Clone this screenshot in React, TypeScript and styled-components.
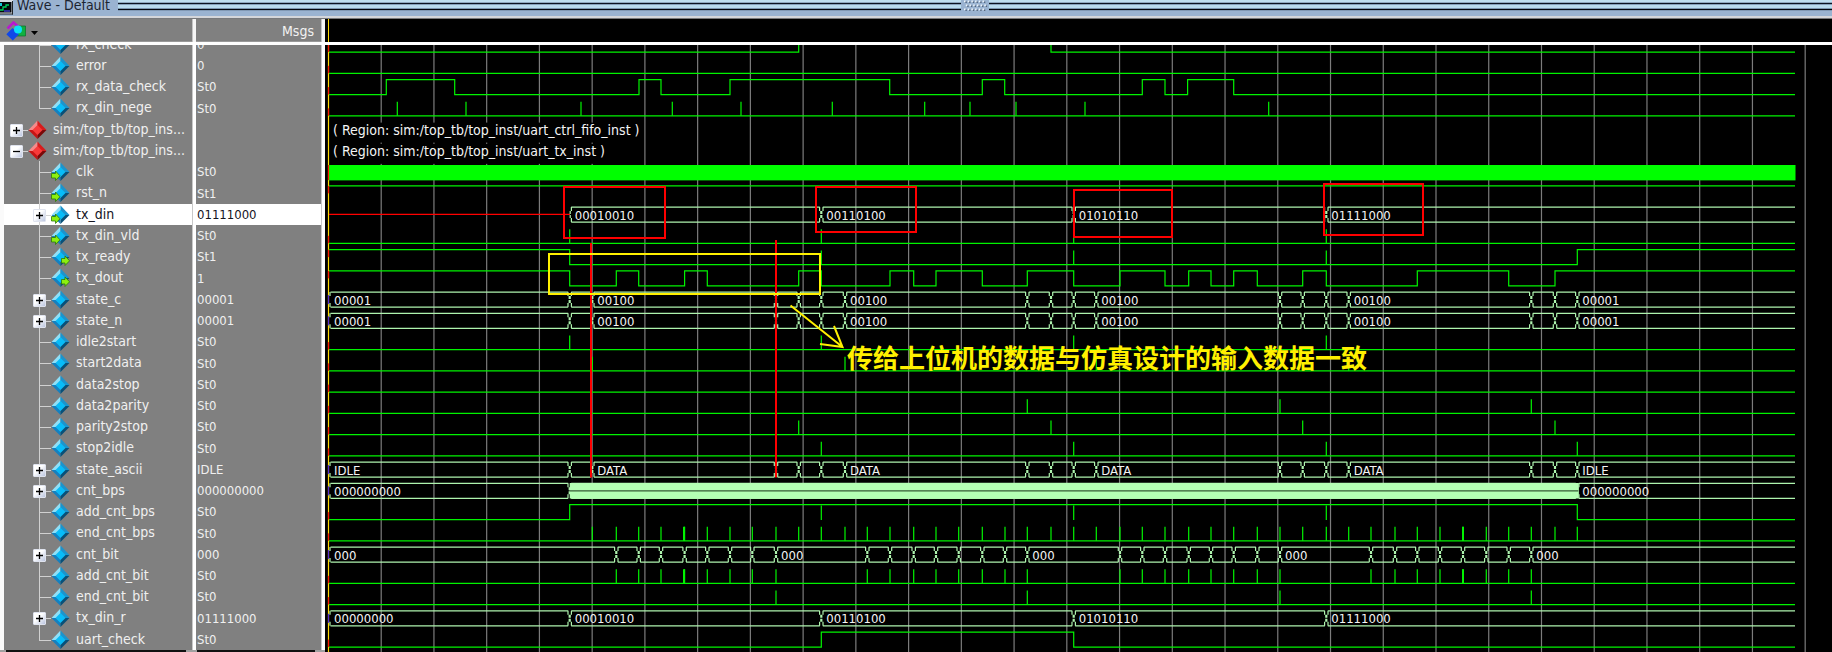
import React from 'react';
import styled, { createGlobalStyle, css } from 'styled-components';

const GlobalStyle = createGlobalStyle`
  * { box-sizing: border-box; }
  body {
    margin: 0;
    background: #000;
    overflow: hidden;
    font-family: "DejaVu Sans Condensed", "DejaVu Sans", sans-serif;
    font-size: 13px;
  }
`;

/* ---------- shell ---------- */

const Window = styled.div`
  display: flex;
  flex-direction: column;
  min-height: 100vh;
  background: #000;
`;

const TitleBar = styled.header`
  display: flex;
  align-items: flex-start;
  height: 16px;
  background: #9ab3d1;
`;

const Title = styled.h1`
  margin: 0;
  padding: 0 8px 0 3px;
  font-size: 14px;
  font-weight: 400;
  line-height: 10px;
  color: #1c2430;
  white-space: pre;
`;

const TitleRule = styled.div`
  flex: 1;
  height: 11px;
  background: linear-gradient(
    #bfe0f0 0 2px, #8fa9c0 2px 3px, #0a1420 3px 4px, #86a0ba 4px 5px,
    #b9dcee 5px 8px, #7c96b0 8px 9px, #04080c 9px 10px, #8098b4 10px 11px
  );
`;

const Bevel = styled.div`
  height: 3px;
  background: linear-gradient(#d4d6da 0 2px, #77797c 2px 3px);
`;

const HeaderRow = styled.div`
  display: flex;
  height: 26px;
  border-bottom: 3px solid #fff;
  box-shadow: inset 0 -1px 0 #9a9a9a;
  background: #808080;
`;

const HeaderCell = styled.div<{ $width: number; $end?: boolean }>`
  display: flex;
  align-items: center;
  justify-content: ${(p) => (p.$end ? 'flex-end' : 'flex-start')};
  width: ${(p) => p.$width}px;
  padding: 0 8px 0 6px;
  border-right: 3px solid #f6f6f6;
  box-shadow: inset -1px 0 0 #c4c4c4;
  color: #f2f2f2;
  font-size: 14px;
`;

const TimeCell = styled.div`
  flex: 1;
  padding-left: 3px;
  background: #000;
`;

const HeaderCursor = styled.div`
  width: 1px;
  height: 100%;
  background: #ffd800;
`;

const ToolButton = styled.button`
  display: flex;
  align-items: center;
  gap: 4px;
  padding: 0;
  border: 0;
  background: none;
`;

const Body = styled.main`
  display: flex;
  flex: 1;
  overflow: hidden;
`;

const Side = styled.section`
  flex: none;
  width: 325px;
  overflow: hidden;
  background: #808080;
`;

/* ---------- object list ---------- */

const ObjectTable = styled.table`
  width: 100%;
  margin-top: -11px;
  border-spacing: 0;
  table-layout: fixed;
`;

const ObjectRow = styled.tr<{ $selected?: boolean }>`
  height: 21px;
  color: #f0f0f0;
  line-height: 21px;
  &:nth-child(4n) { height: 22px; }
  ${(p) =>
    p.$selected &&
    css`
      background: #fff;
      color: #14141e;
    `}
`;

const NameCell = styled.td`
  width: 196px;
  padding: 0;
  border-left: 4px solid #fafafa;
  border-right: 3px solid #fff;
  box-shadow: inset -1px 0 0 #c8c8c8;
  font-size: 14px;
`;

const ValueCell = styled.td`
  padding: 0 0 0 1px;
  border-right: 3px solid #fff;
  box-shadow: inset -1px 0 0 #c8c8c8;
`;

const NameLine = styled.div<{ $indent: number }>`
  display: flex;
  align-items: stretch;
  height: 21px;
  padding-left: ${(p) => p.$indent}px;
  white-space: nowrap;
  tr:nth-child(4n) & { height: 22px; }
`;

const Twig = styled.span<{ $kind: 'mid' | 'last' | 'root' }>`
  flex: none;
  width: 18px;
  padding-top: 5px;
  background-image: linear-gradient(#d0d0d0, #d0d0d0), linear-gradient(#d0d0d0, #d0d0d0);
  background-repeat: no-repeat;
  background-position: 6px 0, 6px 11px;
  background-size: 1px ${(p) => (p.$kind === 'mid' ? '100%' : p.$kind === 'last' ? '12px' : '0')}, 13px 1px;
`;

const Expander = styled.button`
  display: flex;
  align-items: center;
  justify-content: center;
  width: 13px;
  height: 13px;
  padding: 0;
  border: 1px solid #dfe3ee;
  border-radius: 1px;
  background: linear-gradient(135deg, #fff 40%, #bcc6e0);
`;

const Name = styled.span`
  margin-left: 6px;
`;

const BottomStrip = styled.div`
  display: flex;
  gap: 11px;
  height: 2px;
  padding-left: 6px;
  background: #a0a0a0;
`;

const StripBar = styled.div<{ $width: number }>`
  width: ${(p) => p.$width}px;
  height: 2px;
  background: #111;
`;

type Icon = 'plain' | 'in' | 'out' | 'region';

const DiamondSvg = styled.svg`
  flex: none;
`;

const Diamond = ({ kind }: { kind: Icon }) => {
  const c =
    kind === 'region'
      ? { tl: '#f58a8a', tr: '#d81c1c', bl: '#c81414', br: '#7a0808', mid: '#f83a3a' }
      : { tl: '#8fe0f8', tr: '#1c94cc', bl: '#1480c0', br: '#085078', mid: '#08bcf8' };
  return (
    <DiamondSvg width="19" height="21" viewBox="0 0 19 21" aria-hidden="true">
      <path d="M9.500 1.500V11H0.500Z" fill={c.tl} />
      <path d="M9.500 1.500L18.500 11H9.500Z" fill={c.tr} />
      <path d="M0.500 11H9.500V20Z" fill={c.bl} />
      <path d="M18.500 11L9.500 20V11Z" fill={c.br} />
      <path d="M9.500 6L14.500 11L9.500 16L4.500 11Z" fill={c.mid} />
      {kind === 'in' && (
        <path d="M0.500 12.500H4.500V10L9 14.800L4.500 19.500V17H0.500Z" fill="#8cf010" stroke="#2c7a08" strokeWidth=".8" />
      )}
      {kind === 'out' && (
        <path d="M10.500 12.500H14V10L18.600 14.800L14 19.500V17H10.500Z" fill="#8cf010" stroke="#2c7a08" strokeWidth=".8" />
      )}
    </DiamondSvg>
  );
};

/* ---------- data ---------- */

interface Item {
  name: string;
  value: string;
  icon?: Icon;
  expand?: '+' | '-';
  selected?: boolean;
  last?: boolean;
}

const items: Item[] = [
  { name: 'rx_check', value: '0' },
  { name: 'error', value: '0' },
  { name: 'rx_data_check', value: 'St0' },
  { name: 'rx_din_nege', value: 'St0', last: true },
  { name: 'sim:/top_tb/top_ins...', value: '', icon: 'region', expand: '+' },
  { name: 'sim:/top_tb/top_ins...', value: '', icon: 'region', expand: '-' },
  { name: 'clk', value: 'St0', icon: 'in' },
  { name: 'rst_n', value: 'St1', icon: 'in' },
  { name: 'tx_din', value: '01111000', icon: 'in', expand: '+', selected: true },
  { name: 'tx_din_vld', value: 'St0', icon: 'in' },
  { name: 'tx_ready', value: 'St1', icon: 'out' },
  { name: 'tx_dout', value: '1', icon: 'out' },
  { name: 'state_c', value: '00001', expand: '+' },
  { name: 'state_n', value: '00001', expand: '+' },
  { name: 'idle2start', value: 'St0' },
  { name: 'start2data', value: 'St0' },
  { name: 'data2stop', value: 'St0' },
  { name: 'data2parity', value: 'St0' },
  { name: 'parity2stop', value: 'St0' },
  { name: 'stop2idle', value: 'St0' },
  { name: 'state_ascii', value: 'IDLE', expand: '+' },
  { name: 'cnt_bps', value: '000000000', expand: '+' },
  { name: 'add_cnt_bps', value: 'St0' },
  { name: 'end_cnt_bps', value: 'St0' },
  { name: 'cnt_bit', value: '000', expand: '+' },
  { name: 'add_cnt_bit', value: 'St0' },
  { name: 'end_cnt_bit', value: 'St0' },
  { name: 'tx_din_r', value: '01111000', expand: '+' },
  { name: 'uart_check', value: 'St0', last: true },
];

/* ---------- wave drawing ---------- */

const X0 = 329;
const X1 = 1795;
const GREEN = '#00f400';
const BUS = '#aef4ae';

// Baud-tick positions, one for each bit period.
const T = [
  569.7, 592.3, 616.3, 638.7, 661, 684.6, 707.3, 730, 752.3, 776, 798.7, 821.3, 845, 867.3, 890,
  913.7, 936, 958.7, 982.3, 1005, 1027.3, 1051, 1073.7, 1096.3, 1120, 1142.3, 1165, 1188.7, 1211,
  1233.7, 1257.3, 1280, 1302.7, 1326.3, 1348.7, 1371, 1395, 1417.3, 1440, 1463, 1486.3, 1508.7,
  1531.3, 1555, 1577.3,
];
const at = (...n: number[]) => n.map((i) => T[i]);
const frames = (n: number) => at(n, n + 11, n + 22, n + 33);
const span = (a: number, b: number) => T.slice(a, b + 1);

const low = (row: number) => 52.1 + 21.25 * row;
const high = (row: number) => low(row) - 15;

const Line = styled.path<{ $color?: string; $w?: number }>`
  fill: none;
  stroke: ${(p) => p.$color ?? GREEN};
  stroke-width: ${(p) => p.$w ?? 1.2};
`;

const WaveSvg = styled.svg`
  flex: 1;
  min-width: 0;
  background: #000;
`;

const BusText = styled.text<{ $large?: boolean }>`
  fill: #f4f4f4;
  font-size: ${(p) => (p.$large ? 14 : 13)}px;
  white-space: pre;
`;

const NoteText = styled.text`
  fill: #fff000;
  font-family: "Noto Sans CJK SC", sans-serif;
  font-size: 26px;
  font-weight: 700;
`;

const Level = ({ row, edges = [], start = 0 }: { row: number; edges?: number[]; start?: 0 | 1 }) => {
  let v = start;
  const y = () => (v ? high(row) : low(row));
  let d = `M${X0} ${y()}`;
  edges.forEach((x) => {
    d += `H${x}`;
    v = v ? 0 : 1;
    d += `V${y()}`;
  });
  return (
    <>
      <Line d={`${d}H${X1}`} />
      <Line
        $color="#ff1800"
        d={start ? `M328.500 ${high(row)}V${high(row) + 7.500}` : `M328.500 ${low(row) - 7.500}V${low(row)}`}
      />
    </>
  );
};

const Ticks = ({ row, xs, down }: { row: number; xs: number[]; down?: boolean }) => (
  <Line
    d={xs
      .map((x) => (down ? `M${x} ${high(row) + 1}V${low(row) + 0.5}` : `M${x} ${low(row) - 14}V${low(row)}`))
      .join('')}
  />
);

const Bus = ({
  row, xs, labels, from = X0, open,
}: { row: number; xs: number[]; labels: [number, string][]; from?: number; open?: boolean }) => {
  const h = high(row);
  const l = low(row);
  const stops = [from, ...xs, X1];
  let rails = '';
  for (let i = 0; i < stops.length - 1; i++) {
    const a = stops[i] + 1.5;
    const b = i === stops.length - 2 ? X1 : stops[i + 1] - 1.5;
    rails += `M${a} ${h}H${b}M${a} ${l}H${b}`;
  }
  // One side of a value change: outer stubs at both rails, inner stroke between them.
  const side = (x: number, s: 1 | -1) =>
    `M${x + s * 1.7} ${h}V${h + 4}M${x + s * 0.5} ${h + 4}V${h + 7}M${x + s * 0.5} ${l - 7}V${l - 4}M${x + s * 1.7} ${l - 4}V${l}`;
  const both = xs.map((x) => side(x, 1) + side(x, -1)).join('');
  return (
    <>
      <Line $color={BUS} d={rails + both + (open ? side(from, 1) : '')} />
      {!open && (
        <>
          <Line $color="#5a30d0" d={`M328.500 ${h + 3}V${l - 3}`} />
          <Line $color={BUS} d={`M330 ${h}V${h + 4}M330 ${l}V${l - 4}`} />
        </>
      )}
      {labels.map(([x, t]) => (
        <BusText key={x} x={x + 5} y={l - 2.6}>{t}</BusText>
      ))}
    </>
  );
};

const stateXs = at(0, 1, 9, 10, 11, 12, 20, 21, 22, 23, 31, 32, 33, 34, 42, 43, 44);
const stateLabels = (idle: string, data: string): [number, string][] => [
  [X0, idle],
  ...frames(1).map((x): [number, string] => [x, data]),
  [T[44], idle],
];
const bitXs = [...span(2, 9), ...span(13, 20), ...span(24, 31), ...span(35, 42)];
const words = ['00010010', '00110100', '01010110', '01111000'];
const wordLabels = frames(0).map((x, i): [number, string] => [x, words[i]]);

const Region = ({ row, width, text }: { row: number; width: number; text: string }) => (
  <>
    <rect x="330" y={low(row) - 14.5} width={width} height="20" fill="#000" />
    <BusText $large x="333" y={low(row) - 2.4}>{text}</BusText>
  </>
);

const Waves = () => (
  <WaveSvg role="img" aria-label="Signal waveforms">
    <g transform="translate(-325 -45)">
      <Line
        $color="#7c7c7c"
        d={Array.from({ length: 28 }, (_, i) => `M${381.2 + 52.74 * i} 45V2000`).join('')}
      />
      <Line $color="#ffd800" d="M328.500 45V2000" />

      <Level row={0} edges={[798.7, 1051]} />
      <Level row={1} />
      <Level
        row={2}
        edges={[386.3, 454.7, 639, 661, 730, 889.7, 982.3, 1004.7, 1142.3, 1165, 1187.6, 1233.7]}
      />
      <Level row={3} />
      <Ticks row={3} xs={[397.3, 466, 581, 672.3, 741, 832.3, 924.7, 970, 1016, 1085, 1268.7]} />
      <Region row={4} width={308} text="( Region: sim:/top_tb/top_inst/uart_ctrl_fifo_inst )" />
      <Region row={5} width={274} text="( Region: sim:/top_tb/top_inst/uart_tx_inst )" />
      <rect x="328.500" y="165" width="1467" height="15.400" fill="#00ff00" />
      <Line $color="#ff1800" d="M328.500 165V180" />
      <Level row={7} start={1} />
      <Line $color="#ff0000" d={`M${X0} 214.400H570`} />
      <Bus row={8} from={T[0]} open xs={frames(0).slice(1)} labels={wordLabels} />
      <Level row={9} />
      <Ticks row={9} xs={frames(0)} />
      <Level row={10} start={1} edges={at(0, 44)} />
      <Ticks row={10} xs={at(11, 22, 33)} />
      <Level
        row={11}
        start={1}
        edges={at(0, 2, 3, 5, 6, 10, 11, 14, 15, 16, 18, 20, 22, 24, 26, 27, 28, 29, 30, 32, 33, 37, 41, 43)}
      />
      <Bus row={12} xs={stateXs} labels={stateLabels('00001', '00100')} />
      <Bus row={13} xs={stateXs} labels={stateLabels('00001', '00100')} />
      {[14, 15, 16, 17, 18, 19, 23, 25, 26].map((r) => <Level key={r} row={r} />)}
      <Ticks row={14} xs={frames(0)} />
      <Ticks row={15} xs={frames(1)} />
      <Ticks row={17} xs={frames(9)} />
      <Ticks row={18} xs={frames(10)} />
      <Ticks row={19} xs={frames(11)} />
      <Bus row={20} xs={stateXs} labels={stateLabels('IDLE', 'DATA')} />
      <Bus row={21} xs={at(0, 44)} labels={[[X0, '000000000'], [T[44], '000000000']]} />
      <rect x={T[0]} y="483" width={T[44] - T[0] + 1.5} height="15.500" fill="#b4ffb4" />
      <Line $color="#345a34" d={`M${T[0]} 490.800H${T[44] + 1}`} />
      <Level row={22} edges={at(0, 44)} />
      <Ticks row={22} xs={at(11, 22, 33)} down />
      <Ticks row={23} xs={T.slice(1)} />
      <Line $w={2} d={`M${T[5] - 0.6} ${low(23) - 14}v14M${T[39]} ${low(23) - 14}v14`} />
      <Bus
        row={24}
        xs={bitXs}
        labels={[[X0, '000'], ...frames(9).map((x): [number, string] => [x, '000'])]}
      />
      <Ticks row={25} xs={bitXs} />
      <Line $w={2} d={`M${T[5] - 0.6} ${low(25) - 14}v14M${T[39]} ${low(25) - 14}v14`} />
      <Ticks row={26} xs={frames(9)} />
      <Bus row={27} xs={frames(0)} labels={[[X0, '00000000'], ...wordLabels]} />
      <Level row={28} edges={at(11, 22)} />

      <Line
        $color="#ff0000"
        $w={2}
        d="M564 187H665V238H564ZM816 187H916V232H816ZM1074 190H1172V237H1074ZM1324 184H1423V235H1324ZM591 243V477.500M776 240V477.500"
      />
      <Line $color="#fff000" $w={2} d="M549 254H820V294H549ZM790.500 305.500L842.500 347M834 326L842.500 347L820 344" />
      <NoteText x="847" y="368">传给上位机的数据与仿真设计的输入数据一致</NoteText>
    </g>
  </WaveSvg>
);

/* ---------- small drawings ---------- */

const FixedSvg = styled.svg`
  flex: none;
`;

const AppIcon = () => (
  <FixedSvg width="14" height="15" viewBox="0 0 14 15" aria-hidden="true">
    <path d="M0 0H13V14H0Z" fill="#d8dce4" />
    <path d="M0 2H11.500V12.500H0Z" fill="#06080c" />
    <path d="M0 3H2V6H0Z" fill="#10c8d8" />
    <path d="M0 10H3V7H6V5H9" fill="none" stroke="#00d060" strokeWidth="1.300" />
    <path d="M4 11H10" stroke="#4040e0" strokeWidth="1.300" />
    <path d="M12.500 1V14.500M0 14H13" fill="none" stroke="#202428" />
  </FixedSvg>
);

const Grip = () => (
  <FixedSvg width="28" height="11" viewBox="0 0 28 11" aria-hidden="true">
    {[1, 5, 9].flatMap((y, r) =>
      Array.from({ length: 6 }, (_, i) => {
        const x = 3 + i * 3.7 + (r === 1 ? 1.8 : 0);
        return (
          <g key={`${y}-${i}`}>
            <rect x={x} y={y - 0.5} width="1.700" height="1.700" fill="#eef6fc" />
            <rect x={x + 1.4} y={y + 0.6} width="1.400" height="1.200" fill="#44546a" />
          </g>
        );
      }),
    )}
  </FixedSvg>
);

const ShapesIcon = () => (
  <svg width="21" height="20" viewBox="0 0 21 20" aria-hidden="true">
    <path d="M13 5H19.500V15H9V11Z" fill="#10b040" stroke="#087028" strokeWidth=".7" />
    <path d="M1.500 7.500L7.500 1.500L12 5.500" fill="none" stroke="#b818d0" strokeWidth="2.600" />
    <path d="M6.500 7L13 13.200L6.800 19.500L.3 13.200Z" fill="#1048e8" />
    <circle cx="12" cy="8.500" r="4" fill="#08e0f8" />
  </svg>
);

const CaretSvg = styled.svg`
  margin-top: 4px;
`;

const Caret = () => (
  <CaretSvg width="7" height="4" viewBox="0 0 7 4" aria-hidden="true">
    <path d="M0 0H7L3.500 4Z" fill="#000" />
  </CaretSvg>
);

const Sign = ({ kind }: { kind: '+' | '-' }) => (
  <svg width="7" height="7" viewBox="0 0 7 7" aria-hidden="true">
    <path d={kind === '+' ? 'M0 3.500H7M3.500 0V7' : 'M0 3.500H7'} stroke="#000" strokeWidth="1.300" />
  </svg>
);

export default function App() {
  return (
    <Window>
      <GlobalStyle />
      <TitleBar>
        <AppIcon />
        <Title>Wave - Default</Title>
        <TitleRule />
        <Grip />
        <TitleRule />
      </TitleBar>
      <Bevel />
      <HeaderRow>
        <HeaderCell $width={196}>
          <ToolButton aria-label="Object filter">
            <ShapesIcon />
            <Caret />
          </ToolButton>
        </HeaderCell>
        <HeaderCell $width={129} $end>Msgs</HeaderCell>
        <TimeCell>
          <HeaderCursor />
        </TimeCell>
      </HeaderRow>
      <Body>
        <Side>
          <ObjectTable>
            <tbody>
              {items.map((it, i) => {
                const root = it.icon === 'region';
                return (
                  <ObjectRow key={i} $selected={it.selected}>
                    <NameCell>
                      <NameLine $indent={root ? 6 : 29}>
                        <Twig $kind={root ? 'root' : it.last ? 'last' : 'mid'}>
                          {it.expand && (
                            <Expander aria-label={it.expand === '+' ? 'Expand' : 'Collapse'}>
                              <Sign kind={it.expand} />
                            </Expander>
                          )}
                        </Twig>
                        <Diamond kind={it.icon ?? 'plain'} />
                        <Name>{it.name}</Name>
                      </NameLine>
                    </NameCell>
                    <ValueCell>{it.value}</ValueCell>
                  </ObjectRow>
                );
              })}
            </tbody>
          </ObjectTable>
          <BottomStrip>
            <StripBar $width={180} />
            <StripBar $width={118} />
          </BottomStrip>
        </Side>
        <Waves />
      </Body>
    </Window>
  );
}
